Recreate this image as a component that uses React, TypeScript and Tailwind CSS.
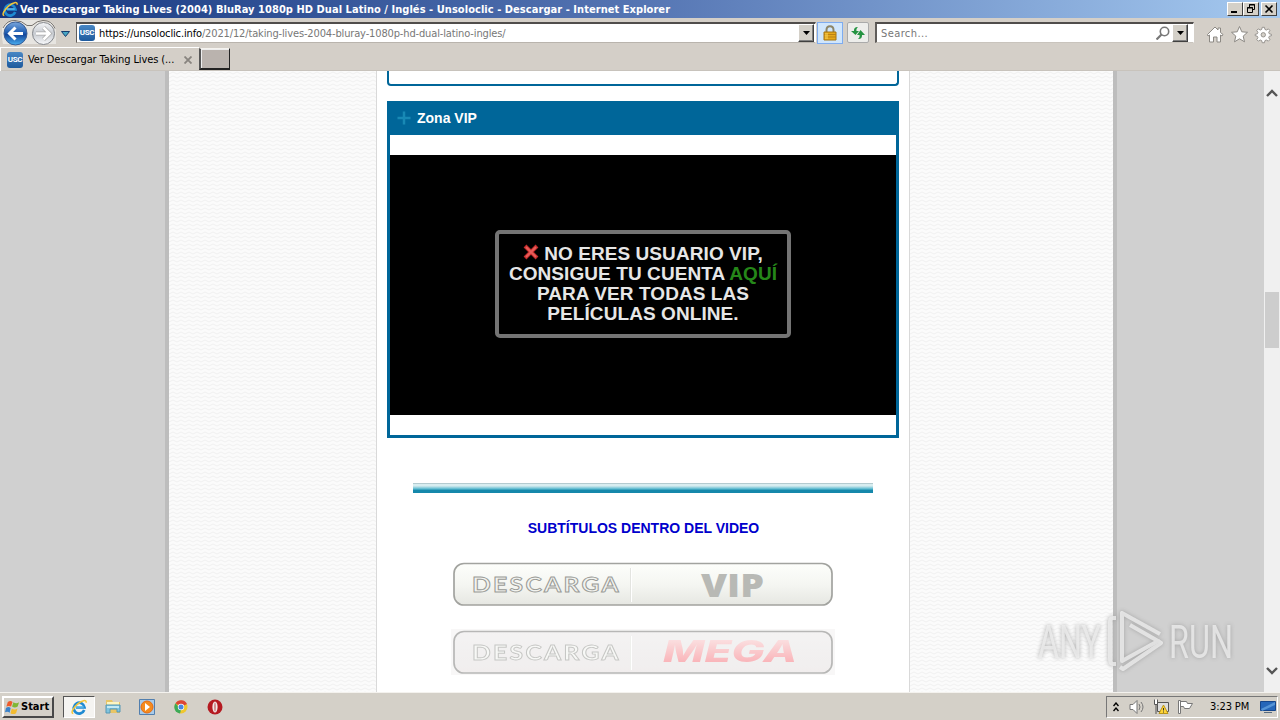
import type { ReactNode } from "react";

const tahoma = "font-['DejaVu_Sans_Condensed','DejaVu_Sans',sans-serif] [font-stretch:condensed]";

function IeLogo({ className }: { className: string }) {
  return (
    <svg viewBox="0 0 16 16" className={className} fill="none">
      <path d="M13.200 11A5.400 5.400 0 1 1 13.500 8.500H5" stroke="#1f8ad2" strokeWidth="2.700" />
      <path d="M4.200 8h8.500" stroke="#7fd4fb" strokeWidth="1" />
      <path d="M2.300 14.600C-.8 14 2.500 8.400 6.800 4.800 11 1.300 15.500.2 15.200 3.800" stroke="#f4c63a" strokeWidth="1.500" />
    </svg>
  );
}

function WindowButton({ children }: { children: ReactNode }) {
  return (
    <button className="flex h-[14px] w-4 items-center justify-center border border-t-white border-l-white border-r-[#404040] border-b-[#404040] bg-[#d4d0c8]">
      {children}
    </button>
  );
}

function TitleBar() {
  return (
    <header className="flex h-[18px] items-center bg-linear-to-r from-[#16367f] via-[#5575b3] to-[#a6caf0] pr-[3px] pl-[2px]">
      <IeLogo className="h-4 w-4" />
      <h1 className={`${tahoma} ml-[2px] flex-1 pt-px text-[11px] leading-[17px] font-bold tracking-[0.05px] whitespace-nowrap text-white`}>
        Ver Descargar Taking Lives (2004) BluRay 1080p HD Dual Latino / Inglés - Unsoloclic - Descargar - Internet Explorer
      </h1>
      <WindowButton>
        <svg viewBox="0 0 14 12" className="h-3 w-[14px]">
          <path d="M3 8h6v2H3z" />
        </svg>
      </WindowButton>
      <WindowButton>
        <svg viewBox="0 0 14 12" className="h-3 w-[14px]" fill="none" stroke="#000">
          <path d="M5.500 4V1.500h5v5H8M5 2h6M3.500 4.500h5v5h-5zM3 5h6" />
        </svg>
      </WindowButton>
      <div className="ml-[2px]">
        <WindowButton>
          <svg viewBox="0 0 14 12" className="h-3 w-[14px]" stroke="#000" strokeWidth="1.600">
            <path d="m3.500 2.500 7 7M10.500 2.500l-7 7" />
          </svg>
        </WindowButton>
      </div>
    </header>
  );
}

function SiteIcon() {
  return (
    <span className="flex h-4 w-4 shrink-0 items-center justify-center rounded-[3px] bg-linear-to-b from-[#4887c4] to-[#1e5a9d] font-['Roboto','Liberation_Sans',sans-serif] text-[8px] leading-none font-bold tracking-[-0.3px] text-white">
      USC
    </span>
  );
}

function DropButton() {
  return (
    <button className="flex h-[18px] w-4 items-center justify-center border border-t-white border-l-white border-r-[#404040] border-b-[#404040] bg-[#d4d0c8] shadow-[inset_-1px_-1px_#808080]">
      <svg viewBox="0 0 7 4" className="h-1 w-[7px]">
        <path d="M0 0h7L3.500 4z" />
      </svg>
    </button>
  );
}

function NavBar() {
  return (
    <div className="flex h-[29px] items-center">
      <svg viewBox="0 0 74 29" className="h-[29px] w-[74px] shrink-0">
        <defs>
          <linearGradient id="back" x2="0" y2="1">
            <stop stopColor="#7aa6dc" />
            <stop offset=".45" stopColor="#2260b4" />
            <stop offset=".55" stopColor="#14479b" />
            <stop offset="1" stopColor="#4ab0f2" />
          </linearGradient>
          <linearGradient id="forward" x2="0" y2="1">
            <stop stopColor="#f4f5f7" />
            <stop offset=".5" stopColor="#c7cbd1" />
            <stop offset="1" stopColor="#f8f9fb" />
          </linearGradient>
        </defs>
        <path d="M2 20V10Q5 3 15 2H42Q54 2 56 12v14H3z" fill="#e7e5e1" />
        <path d="M3 10Q7 2 15 2.500q7 0 12 5h5q5-5 11-5 9 0 12 8" fill="none" stroke="#77736f" />
        <circle cx="15.500" cy="15.500" r="11.500" fill="url(#back)" stroke="#385d96" />
        <circle cx="43.500" cy="15.500" r="11" fill="url(#forward)" stroke="#85888d" />
        <path d="M23 15.500H10M15.500 9.500l-6 6 6 6" fill="none" stroke="#fff" strokeWidth="3" />
        <path d="M36 15.500h13M43.500 9.500l6 6-6 6" fill="none" stroke="#aaa" strokeWidth="4" />
        <path d="M36 15.500h13M43.500 9.500l6 6-6 6" fill="none" stroke="#fff" strokeWidth="2.600" />
        <path d="M61.500 13.500h8l-4 5z" fill="#48a7c4" stroke="#163e70" />
      </svg>
      <div className="ml-[2px] flex h-[21px] w-[740px] items-center border border-t-2 border-t-[#504d4b] border-l-[#605d5b] border-r-white border-b-[#b9b4ad] bg-white pr-px pl-[2px]">
        <SiteIcon />
        <span className={`${tahoma} ml-1 flex-1 pt-[2px] text-[11px] tracking-[-0.14px] text-[#777]`}>
          <span className="text-black">https://unsoloclic.info</span>
          /2021/12/taking-lives-2004-bluray-1080p-hd-dual-latino-ingles/
        </span>
        <DropButton />
      </div>
      <button className="ml-px flex h-[22px] w-[26px] items-center justify-center border border-[#7eacf0] bg-[#d0e6fc]">
        <svg viewBox="0 0 14 16" className="h-4 w-[14px]">
          <path d="M3.500 8V5c0-5 7-5 7 0v3" fill="none" stroke="#8d8567" strokeWidth="2" />
          <path d="M1 7h12v8H1z" fill="#e6a91b" stroke="#a67510" />
          <path d="M1 9.500h12M1 12h12" stroke="#ba8114" />
          <path d="M2 8h3v6H2z" fill="#f8cf50" opacity=".6" />
        </svg>
      </button>
      <button className="ml-1 flex h-[21px] w-[22px] items-center justify-center rounded-[2px] border border-[#aaa] bg-[#ededeb]">
        <svg viewBox="0 0 14 14" className="h-[14px] w-[14px]" fill="#259342">
          <path d="M7 1C4 1 3 2 3 5H0l4.500 4L8 5H5.500C5 3 6 2 7 1zM7 13c3 0 4-1 4-4h3L9.500 4 6 9h2.500C9 11 8 12 7 13z" />
        </svg>
      </button>
      <div className="ml-[6px] flex h-[21px] w-[319px] items-center border border-t-2 border-t-[#504d4b] border-l-2 border-l-[#605d5b] border-r-white border-b-[#c9c4bd] bg-white pr-[5px] pl-1">
        <span className={`${tahoma} flex-1 pt-[2px] text-[11px] tracking-[0.400px] text-[#777]`}>Search...</span>
        <svg viewBox="0 0 14 14" className="mr-[2px] h-[14px] w-[14px]" fill="none" stroke="#777" strokeWidth="1.600">
          <circle cx="8.500" cy="5.500" r="4.200" />
          <path d="m5.500 8.500-5 5" strokeWidth="2.200" />
        </svg>
        <DropButton />
      </div>
      <svg viewBox="0 0 68 20" className="mt-1 ml-3 h-5 w-[68px]" fill="#fff" stroke="#8c8984">
        <path d="M1.500 9.500 9 2l3 3V3h2.500v4.500l2.500 2-1 1.500-1.500-1V17H11v-5H7.500v5h-4v-7l-1.500 1z" />
        <path d="m33.500 1.500 2.300 5.300 5.700.5-4.300 3.800 1.300 5.700-5-3-5 3 1.300-5.700-4.300-3.800 5.700-.5z" />
        <g transform="translate(6.500 1) scale(.88)">
          <path d="m56.500 1.500-.6 2.400-1.600.7-2.300-1.300-1.700 1.700 1.300 2.300-.7 1.600-2.400.6v1.500l2.400.6.7 1.600-1.300 2.300 1.700 1.700 2.300-1.300 1.600.7.6 2.400h2.500l.6-2.400 1.600-.7 2.300 1.300 1.700-1.700-1.300-2.300.7-1.600 2.400-.6v-1.500l-2.400-.6-.7-1.600 1.300-2.300-1.700-1.700-2.300 1.300-1.600-.7-.6-2.400z" />
          <circle cx="57.700" cy="10" r="2.500" fill="#d4d0c8" />
        </g>
      </svg>
    </div>
  );
}

function TabBar() {
  return (
    <div className="flex h-6 items-start border-b border-[#c8c3bc]">
      <div className="flex h-6 w-[199px] items-center border-t border-l border-white pt-px pl-[6px]">
        <SiteIcon />
        <span className={`${tahoma} ml-[5px] w-[150px] pt-px text-[11px] tracking-[-0.1px] whitespace-nowrap text-black`}>
          Ver Descargar Taking Lives (...
        </span>
        <svg viewBox="0 0 8 8" className="ml-[6px] h-2 w-2" stroke="#88847f" strokeWidth="1.800">
          <path d="m.5.500 7 7M7.500.500l-7 7" />
        </svg>
      </div>
      <div className="mt-[1px] h-[22px] w-[31px] border border-t-[#f5f3ef] border-l-2 border-l-[#555] border-r-[#222] border-b-2 border-b-[#222] bg-[#bab3ae] shadow-[inset_1px_1px_#eee]" />
    </div>
  );
}

function DownloadButton({ kind }: { kind: "VIP" | "MEGA" }) {
  const mega = kind === "MEGA";
  return (
    <svg viewBox="0 0 384 46" className={mega ? "h-[46px] w-[384px] opacity-55" : "h-[46px] w-[384px]"}>
      <defs>
        <linearGradient id={`button-${kind}`} x2="0" y2="1">
          <stop stopColor={mega ? "#eceaea" : "#fdfefb"} />
          <stop offset=".5" stopColor={mega ? "#e8e5e5" : "#f5f6f2"} />
          <stop offset="1" stopColor={mega ? "#e6e0e0" : "#e6e7e2"} />
        </linearGradient>
        <linearGradient id="mega" x2="0" y2="1">
          <stop offset=".2" stopColor="#f8c4c6" />
          <stop offset=".85" stopColor="#f5747d" />
        </linearGradient>
      </defs>
      {mega && <rect width="384" height="46" fill="#f3f2f1" />}
      <rect x="3" y="2.500" width="378" height="41.500" rx="10" fill={`url(#button-${kind})`} stroke={mega ? "#7e7e7c" : "#a2a39f"} strokeWidth="1.700" />
      <path d="M179.500 7v34" stroke="#e3e4e0" />
      <path d="M180.500 7v34" stroke="#fff" />
      <text
        x="21"
        y="31"
        textLength="149"
        lengthAdjust="spacingAndGlyphs"
        className="font-['Lato','Liberation_Sans',sans-serif] text-[21px] font-bold tracking-[2px]"
        fill="#f2f3ef"
        stroke="#999a96"
        strokeWidth=".9"
      >
        DESCARGA
      </text>
      {mega ? (
        <text
          x="212"
          y="33"
          textLength="134"
          lengthAdjust="spacingAndGlyphs"
          className="font-['Inter','Liberation_Sans',sans-serif] text-[30px] font-extrabold italic"
          fill="url(#mega)"
        >
          MEGA
        </text>
      ) : (
        <text
          x="250"
          y="35.500"
          textLength="63"
          lengthAdjust="spacingAndGlyphs"
          className="font-['Open_Sans','Liberation_Sans',sans-serif] text-[32px] font-extrabold"
          fill="#b8b9b5"
        >
          VIP
        </text>
      )}
    </svg>
  );
}

function Article() {
  return (
    <main className="flex w-[534px] flex-col items-center border-x border-[#d9d9d9] bg-white font-['Liberation_Sans',sans-serif]">
      <div className="h-[15px] w-[512px] shrink-0 rounded-b-[4px] border-2 border-t-0 border-[#006699]" />
      <section className="mt-[15px] h-[337px] w-[512px] shrink-0 border-[3px] border-t-0 border-[#006699]">
        <h2 className="flex h-[34px] items-center bg-[#006699] pl-[7px] text-[14px] font-bold text-white">
          <svg viewBox="0 0 14 14" className="mr-[6px] h-[14px] w-[14px]" stroke="#1889b5" strokeWidth="2.500">
            <path d="M7 .5v13M.5 7h13" />
          </svg>
          Zona VIP
        </h2>
        <div className="mt-5 flex h-[260px] justify-center bg-black pt-[75px]">
          <p className="h-[108px] w-[296px] rounded-[5px] border-4 border-[#747474] pt-[10px] text-center text-[19px] leading-5 font-bold tracking-[0.08px] whitespace-nowrap text-[#e6e6e6]">
            <svg viewBox="0 0 16 16" className="mr-[5px] inline h-4 w-4 align-[0px]" strokeWidth="4">
              <path d="m2 2 12 12M14 2 2 14" stroke="#c52d2d" />
              <path d="m3 3 10 10M13 3 3 13" stroke="#e85d59" strokeWidth="2" />
            </svg>
            NO ERES USUARIO VIP,
            <br />
            CONSIGUE TU CUENTA <a className="text-[#258719]">AQUÍ</a>
            <br />
            PARA VER TODAS LAS
            <br />
            PELÍCULAS ONLINE.
          </p>
        </div>
      </section>
      <div className="mt-[45px] h-[10px] w-[460px] shrink-0 border-t border-[#b4cbd0] bg-linear-to-b from-[#d7edf0] from-20% via-[#55b9cf] via-55% to-[#1588ab] to-70%" />
      <p className="mt-[25px] pl-px text-[14px] leading-5 font-bold whitespace-nowrap text-[#0000cc]">
        SUBTÍTULOS DENTRO DEL VIDEO
      </p>
      <div className="mt-[23px] flex flex-col gap-[22px]">
        <DownloadButton kind="VIP" />
        <DownloadButton kind="MEGA" />
      </div>
    </main>
  );
}

function PatternColumn({ className }: { className: string }) {
  return (
    <div className={className}>
      <svg className="h-full w-full">
        <defs>
          <pattern id="chevrons" width="8" height="4" patternUnits="userSpaceOnUse">
            <rect width="8" height="4" fill="#fbfbfb" />
            <path d="m0 3 4-2 4 2" fill="none" stroke="#f1f1f1" />
          </pattern>
        </defs>
        <rect width="100%" height="100%" fill="url(#chevrons)" />
      </svg>
    </div>
  );
}

function ScrollBar() {
  return (
    <div className="flex w-4 flex-col items-center bg-[#f0f0f0]">
      <svg viewBox="0 0 12 8" className="mt-[18px] h-2 w-3" fill="none" stroke="#555" strokeWidth="2.400">
        <path d="m1 7 5-5 5 5" />
      </svg>
      <div className="mt-[195px] h-[56px] w-[14px] bg-[#cdcdcd]" />
      <svg viewBox="0 0 12 8" className="mt-auto mb-[17px] h-2 w-3" fill="none" stroke="#555" strokeWidth="2.400">
        <path d="m1 1 5 5 5-5" />
      </svg>
    </div>
  );
}

function Watermark() {
  return (
    <svg viewBox="0 0 240 66" className="absolute top-[539px] left-[1036px] h-[66px] w-[240px] drop-shadow-[0_0_2px_#999]">
      <g className="font-['Roboto','Liberation_Sans',sans-serif] text-[46px]" fill="#eee" opacity=".8">
        <text x="2" y="48" textLength="63" lengthAdjust="spacingAndGlyphs">ANY</text>
        <text x="133" y="48" textLength="64" lengthAdjust="spacingAndGlyphs">RUN</text>
      </g>
      <g fill="none" stroke="#eee" strokeWidth="4" opacity=".8" strokeLinejoin="round">
        <path d="M80 8h-3q-3 0-3 4v36q0 6 3 6h3" />
        <path d="M124 24 86 3v48l36-20-28-16" />
        <path d="m122 31 3 2-38 26-3-2" />
      </g>
    </svg>
  );
}

function TaskBar() {
  return (
    <footer className="flex h-7 items-center border-t border-[#f4f2ee] bg-[#d4d0c8] pt-px">
      <button className={`${tahoma} ml-[2px] flex h-[22px] w-[52px] items-center border-2 border-t-white border-l-white border-r-[#484848] border-b-[#484848] pl-px text-[11px] font-bold text-black`}>
        <svg viewBox="0 0 16 16" className="mr-px h-[15px] w-[15px] shrink-0">
          <path d="M3 2q3-2 5 0L6.500 7Q4 6 1.500 7z" fill="#ef5b2b" />
          <path d="M9 2.500q3 2 6 0L13.500 7q-3 2-6 0z" fill="#80b734" />
          <path d="M1 8.500q3-2 5 0l-1 5Q3 12 0 13z" fill="#3982cb" />
          <path d="M7.300 9q3 2 6 0l-1.500 5q-3 2-6 0z" fill="#f3bc30" />
        </svg>
        Start
      </button>
      <div className="ml-[9px] flex h-[22px] w-8 items-center justify-center border border-t-[#555] border-l-[#555] border-r-white border-b-white bg-[#f5f4f1]">
        <IeLogo className="h-4 w-4" />
      </div>
      <svg viewBox="0 0 18 18" className="ml-[9px] h-[18px] w-[18px]">
        <path d="M2 2h6l1 2h7v11H2z" fill="#e9c565" />
        <path d="M3 4h12v3H3z" fill="#fff5be" />
        <path d="M2 7h14v7h-3v-3H6v4H2z" fill="#80c4de" stroke="#5797b3" />
        <path d="M3 8h12v2H3z" fill="#c5eaf3" />
      </svg>
      <svg viewBox="0 0 18 18" className="ml-[16px] h-[18px] w-[18px]">
        <path d="M1.500 1.500h15v15h-15z" fill="#a8cbea" stroke="#527fae" />
        <circle cx="9" cy="9" r="6" fill="#f58b1d" stroke="#e66a12" />
        <path d="m7 5 5 4-5 4z" fill="#fff" />
      </svg>
      <svg viewBox="0 0 16 16" className="ml-[17px] h-4 w-4">
        <circle cx="8" cy="8" r="6.500" fill="#efc72e" />
        <path d="M8 8 2.500 4.300A6.500 6.500 0 0 1 14 5z" fill="#dc4636" />
        <path d="M2.500 4.300 8 11l-1 3.500A6.500 6.500 0 0 1 2.500 4.300" fill="#3daa59" />
        <circle cx="8" cy="8" r="3.200" fill="#fff" />
        <circle cx="8" cy="8" r="2.500" fill="#4886e1" />
      </svg>
      <svg viewBox="0 0 16 16" className="ml-[18px] h-4 w-4">
        <circle cx="8" cy="8" r="7.500" fill="#b51a21" />
        <ellipse cx="8" cy="8" rx="2.600" ry="5.500" fill="#f2e8e7" />
        <ellipse cx="8" cy="8" rx=".8" ry="4.500" fill="#c97c7c" />
      </svg>
      <div className="mr-[2px] ml-auto flex h-[22px] w-[172px] items-center border border-t-[#777] border-l-[#777] border-r-white border-b-white pl-[6px]">
        <svg viewBox="0 0 6 10" className="h-[10px] w-[6px]" fill="none" stroke="#000" strokeWidth="1.400">
          <path d="m.5 4 2.500-3 2.500 3M.5 9 3 6l2.500 3" />
        </svg>
        <svg viewBox="0 0 16 16" className="ml-[10px] h-4 w-4" fill="#fff" stroke="#777">
          <path d="M1 5.500h3l4-4v13l-4-4H1z" />
          <path d="M10 5q2 3 0 6M12 3q4 5 0 10" fill="none" />
        </svg>
        <svg viewBox="0 0 16 16" className="ml-[8px] h-4 w-4" fill="none" stroke="#555">
          <path d="M4.500 3.500h11v9h-11z" fill="#ddd" />
          <path d="M1.500.500v5h3v-5M3 5v10" fill="#fff" />
          <path d="m10.500 6 4.500 8.500H6z" fill="#ffd538" stroke="#ba9519" />
          <path d="M10.500 9v2.500M10.500 12.500v1" stroke="#333" />
        </svg>
        <svg viewBox="0 0 17 16" className="ml-[8px] h-4 w-[17px]" fill="#fff" stroke="#777">
          <path d="M1.500 1.500h2v13h-2zM3.500 2.500h6l1 2h5l-3 5h-5l-1-2h-3z" />
        </svg>
        <span className={`${tahoma} ml-4 pt-px text-[11px] tracking-[-0.1px] whitespace-nowrap text-black`}>3:23 PM</span>
        <svg viewBox="0 0 16 14" className="mr-px ml-auto h-[14px] w-4">
          <path d="M.5 1.500h15v9H.5z" fill="#2566b9" stroke="#15458a" />
          <path d="M1 9 15 2v3L2 11z" fill="#5594d6" />
          <path d="M4 12.500h8" stroke="#586b7f" />
        </svg>
      </div>
    </footer>
  );
}

export default function App() {
  return (
    <div className="flex h-[720px] w-[1280px] flex-col overflow-hidden bg-[#d4cfc8]">
      <TitleBar />
      <NavBar />
      <TabBar />
      <div className="relative flex h-[621px] shrink-0 overflow-hidden bg-[#d0d0d0]">
        <div className="w-[169px] border-r-4 border-[#bdbdbd]" />
        <PatternColumn className="w-[207px]" />
        <Article />
        <PatternColumn className="w-[203px]" />
        <div className="w-[151px] border-l-4 border-[#bdbdbd]" />
        <ScrollBar />
        <Watermark />
      </div>
      <TaskBar />
    </div>
  );
}
